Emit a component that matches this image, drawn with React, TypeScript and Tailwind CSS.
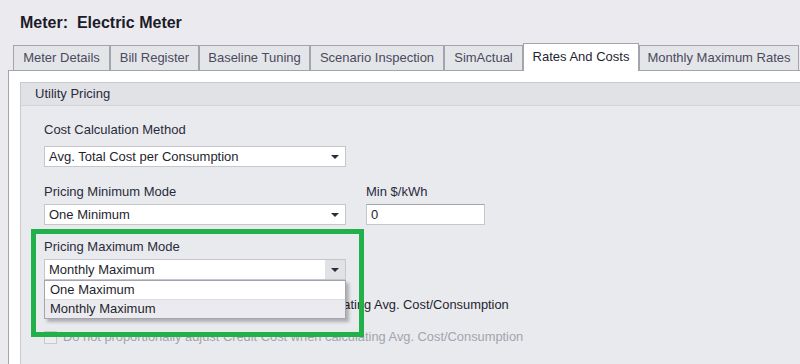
import React from "react"

const tabs = [
    { label: "Meter Details", width: 97 },
    { label: "Bill Register", width: 89 },
    { label: "Baseline Tuning", width: 111 },
    { label: "Scenario Inspection", width: 134 },
    { label: "SimActual", width: 79 },
    { label: "Rates And Costs", width: 116, active: true },
    { label: "Monthly Maximum Rates", width: 160 },
]

function Arrow() {
    return (
        <svg width="8" height="4" viewBox="0 0 8 4" className="shrink-0">
            <path d="M0 0 H8 L4 4 Z" fill="#2b2b3a" />
        </svg>
    )
}

function Dropdown(props: { value: string; open?: boolean }) {
    return (
        <div className="flex h-[21px] w-[302px] items-center border border-[#c6c7cd] bg-white text-[#1f1f2e]">
            <span className="flex-1 pl-[4px]">{props.value}</span>
            <div className={`flex h-full w-[20px] items-center justify-center ${props.open ? "bg-[#e1e2e6]" : ""}`}>
                <Arrow />
            </div>
        </div>
    )
}

function Checkbox(props: { label: string; disabled?: boolean }) {
    return (
        <div className="flex h-[16px] items-center gap-[6px]">
            <div className={`h-[13px] w-[13px] border ${props.disabled ? "border-[#c9cad0] bg-[#eeeef1]" : "border-[#9a9aa4] bg-white"}`} />
            <span className={`whitespace-nowrap text-[12.85px] ${props.disabled ? "text-[#a3a4ac]" : "text-[#1f1f2e]"}`}>{props.label}</span>
        </div>
    )
}

export default function App() {
    return (
        <div className="relative flex h-[364px] w-[800px] flex-col overflow-hidden bg-[#ebebef] font-['Liberation_Sans',Arial,sans-serif] text-[13px] leading-[16px]">
            <div className="h-[43px] shrink-0 pl-[20px] pt-[13px] text-[16px] font-bold leading-[20px] whitespace-pre text-[#1b1b29]">
                Meter:  Electric Meter
            </div>

            <div className="relative z-10 -mb-px flex h-[28px] shrink-0 items-end pl-[13px]">
                {tabs.map((tab) => (
                    <div
                        key={tab.label}
                        style={{ width: tab.width }}
                        className={
                            tab.active
                                ? "flex h-[28px] shrink-0 items-center justify-center border-x border-t border-[#a3a4ad] bg-white pb-[2px] text-[#1f1f2e]"
                                : "flex h-[26px] shrink-0 items-center justify-center border border-[#a3a4ad] bg-[#e4e5e9] text-[#4a4a5e]"
                        }
                    >
                        {tab.label}
                    </div>
                ))}
            </div>

            <div className="ml-[8px] flex-1 border-l border-t border-[#a3a4ad] bg-white pl-[11px] pt-[11px]">
                <div className="h-full border-l border-t border-[#c9cad0] bg-[#e9eaee]">
                    <div className="flex h-[23px] items-center border-b border-[#d3d4da] bg-[#e1e2e6] pl-[14px] text-[#2a2a3a]">
                        Utility Pricing
                    </div>

                    <div className="flex flex-col pl-[23px] pt-[16px] text-[#2a2a3a]">
                        <span>Cost Calculation Method</span>
                        <div className="mt-[8px]">
                            <Dropdown value="Avg. Total Cost per Consumption" />
                        </div>

                        <div className="mt-[17px] flex gap-[20px]">
                            <div className="flex flex-col gap-[4px]">
                                <span>Pricing Minimum Mode</span>
                                <Dropdown value="One Minimum" />
                            </div>
                            <div className="flex flex-col gap-[4px]">
                                <span>Min $/kWh</span>
                                <div className="flex h-[21px] w-[119px] items-center border border-[#c6c7cd] border-t-[#a3a4ad] bg-white pl-[4px] text-[#1f1f2e]">
                                    0
                                </div>
                            </div>
                        </div>

                        <span className="mt-[14px]">Pricing Maximum Mode</span>
                        <div className="relative z-10 mt-[4px] w-[302px]">
                            <Dropdown value="Monthly Maximum" open />
                            <div className="absolute left-0 top-full w-[302px] border border-[#a3a4ad] bg-white text-[#1f1f2e] shadow-[3px_3px_3px_rgba(0,0,0,0.25)]">
                                <div className="flex h-[19px] items-center border-b border-[#dcdde2] pl-[5px]">One Maximum</div>
                                <div className="flex h-[18px] items-center bg-[#ebebef] pl-[5px]">Monthly Maximum</div>
                            </div>
                        </div>

                        <div className="mt-[17px] flex flex-col gap-[16px]">
                            <Checkbox label="Do not proportionally adjust Tax Cost when calculating Avg. Cost/Consumption" />
                            <Checkbox label="Do not proportionally adjust Credit Cost when calculating Avg. Cost/Consumption" disabled />
                        </div>
                    </div>
                </div>
            </div>

            <div className="pointer-events-none absolute left-[31px] top-[229px] z-20 h-[108px] w-[333px] border-[5px] border-[#22b04b]" />
        </div>
    )
}
